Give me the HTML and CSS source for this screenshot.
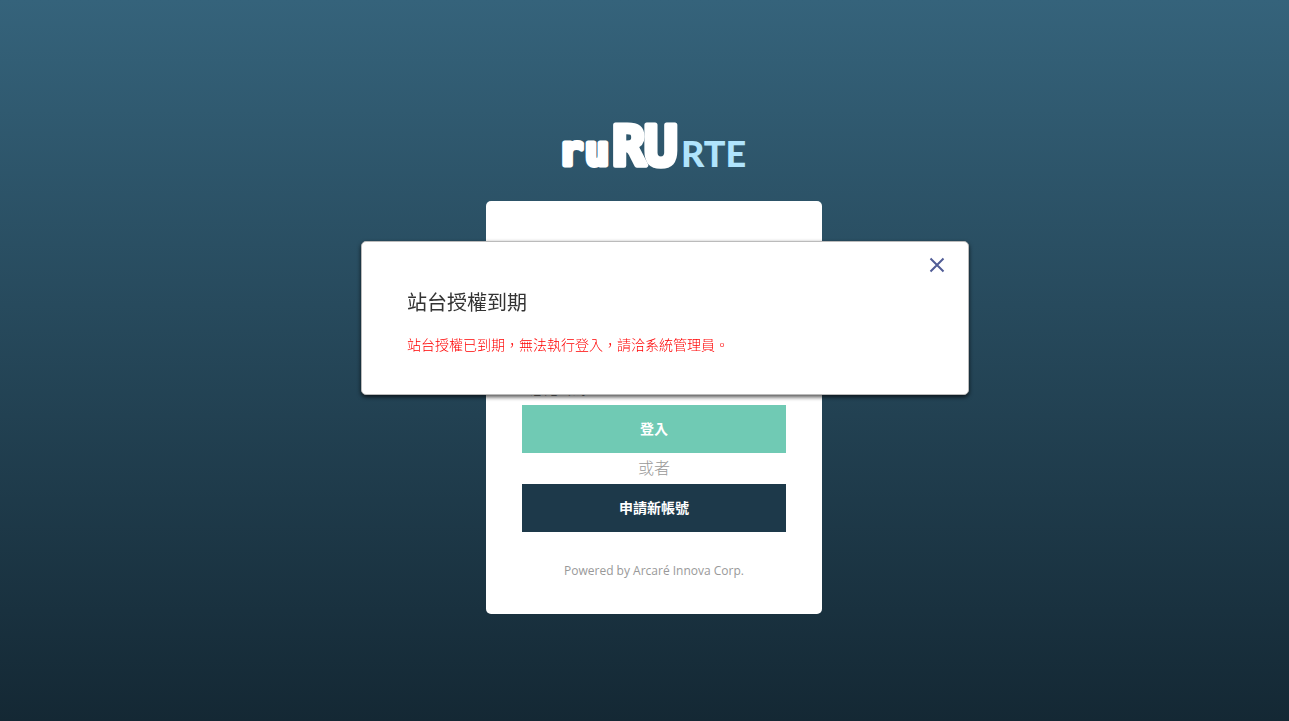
FILE: index.html
```html
<!DOCTYPE html>
<html lang="zh-Hant">
<head>
<meta charset="utf-8">
<meta name="viewport" content="width=device-width, initial-scale=1">
<title>ruRU RTE</title>
<link rel="stylesheet" href="styles.css">
</head>
<body>
<main class="page">
  <svg class="logo" viewBox="0 0 188 50" role="img" aria-label="ruRU RTE">
    <g class="logo-mark">
      <text class="logo-small" x="-1 25" y="45">ru</text>
      <text class="logo-large" x="52 84" y="45">RU</text>
    </g>
    <text class="logo-suffix" x="121" y="47">RTE</text>
  </svg>
  <form class="card">
    <p class="hint">忘記密碼</p>
    <button class="btn btn-login" type="button">登入</button>
    <p class="or">或者</p>
    <button class="btn btn-apply" type="button">申請新帳號</button>
    <p class="powered">Powered by Arcaré Innova Corp.</p>
  </form>
</main>
<div class="overlay">
  <section class="dialog" role="dialog" aria-labelledby="dialog-title">
    <button class="close" type="button" aria-label="關閉">
      <svg viewBox="0 0 16 16" width="16" height="16"><path d="M1.5 1.5 14.5 14.5M14.5 1.5 1.5 14.5" fill="none" stroke="#515d96" stroke-width="2"/></svg>
    </button>
    <h1 class="dialog-title" id="dialog-title">站台授權到期</h1>
    <p class="dialog-text">站台授權已到期，無法執行登入，請洽系統管理員。</p>
  </section>
</div>
</body>
</html>
```
FILE: styles.css
```css
* {
  box-sizing: border-box;
}

body {
  margin: 0;
  min-height: 100vh;
  background: linear-gradient(#35637b, #142834);
  font-family: "Open Sans", "Noto Sans CJK TC", sans-serif;
}

h1,
p {
  margin: 0;
}

.page {
  display: flex;
  flex-direction: column;
  align-items: center;
  min-height: 100vh;
  padding: 120px 0 60px 19px;
}

.logo {
  width: 188px;
  height: 50px;
  overflow: visible;
}

.logo-mark {
  fill: #fff;
  stroke: #fff;
  stroke-linejoin: round;
}

.logo-small {
  font: 700 40px "DejaVu Sans Mono", monospace;
  stroke-width: 5px;
}

.logo-large {
  font: 700 56px "DejaVu Sans Mono", monospace;
  stroke-width: 5px;
}

.logo-suffix {
  font: 900 36px Lato, sans-serif;
  fill: #b0e4fc;
}

.card {
  display: flex;
  flex-direction: column;
  width: 336px;
  max-width: 100%;
  margin-top: 31px;
  padding: 176px 36px 32px;
  border-radius: 5px;
  background: #fff;
}

.hint {
  padding: 0 8px 4px;
  color: #777;
  font-size: 14px;
  line-height: 24px;
}

.btn {
  height: 48px;
  padding: 0 8px 2px;
  border: 0;
  color: #fff;
  font: inherit;
  font-size: 14px;
  font-weight: 700;
  cursor: pointer;
}

.btn-login {
  background: #70cab4;
}

.btn-apply {
  background: #1d394a;
}

.or {
  color: #999;
  font-size: 16px;
  font-weight: 300;
  line-height: 31px;
  text-align: center;
}

.powered {
  margin-top: 28px;
  color: #999;
  font-size: 12px;
  line-height: 22px;
  text-align: center;
}

.overlay {
  position: fixed;
  inset: 0;
  display: flex;
  justify-content: center;
  align-items: flex-start;
  padding: 241px 0 0 41px;
}

.dialog {
  display: flex;
  flex-direction: column;
  width: 608px;
  max-width: 100%;
  padding: 15px 23px 37px 45px;
  border: 1px solid #bbb;
  border-radius: 5px;
  background: #fff;
  box-shadow: 0 2px 4px rgba(0, 0, 0, 0.7);
}

.close {
  align-self: flex-end;
  display: flex;
  padding: 0;
  border: 0;
  background: none;
  cursor: pointer;
}

.dialog-title {
  margin-top: 15px;
  color: #333;
  font-size: 20px;
  font-weight: 400;
  line-height: 30px;
}

.dialog-text {
  margin-top: 15px;
  color: #f00;
  font-size: 14px;
  font-weight: 300;
  line-height: 24px;
}
```
